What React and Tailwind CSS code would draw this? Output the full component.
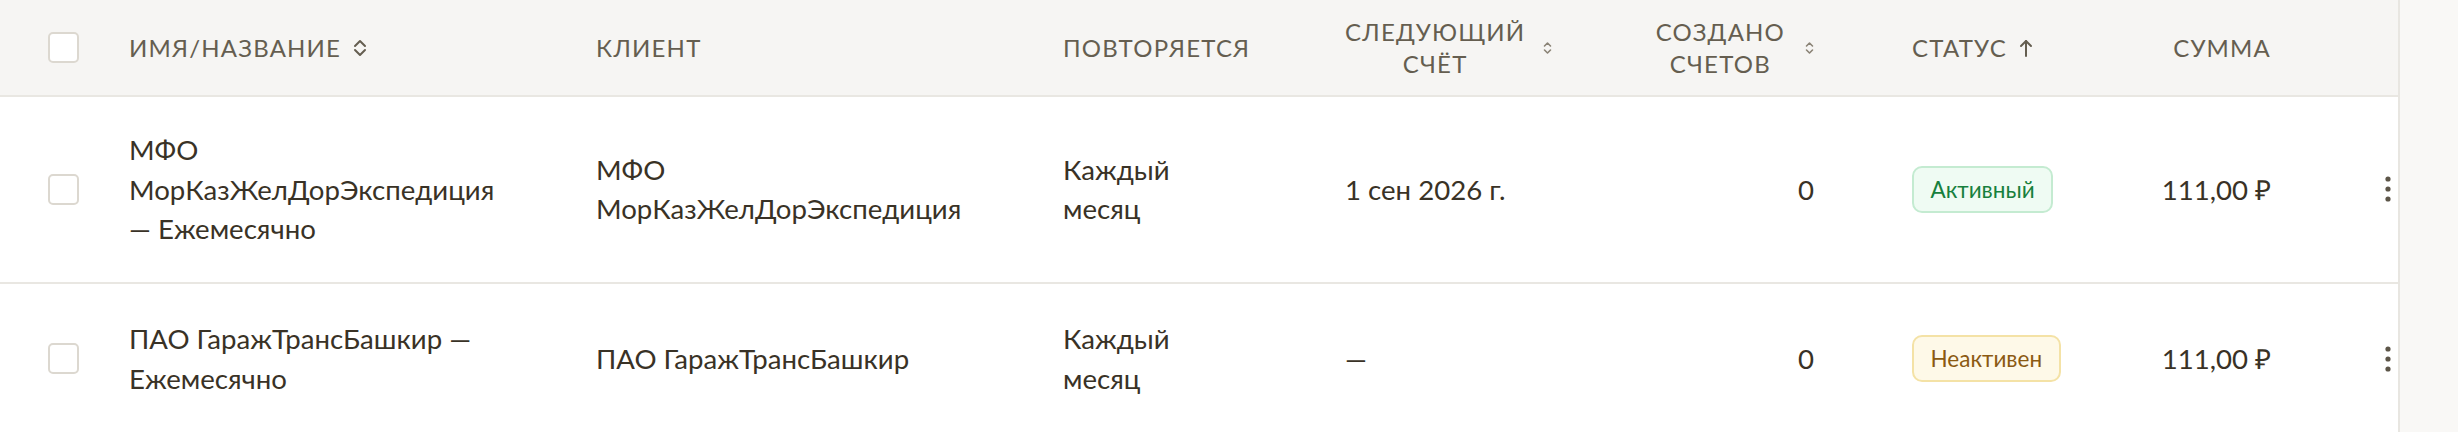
const rows = [
  {
    name: 'МФО МорКазЖелДорЭкспедиция — Ежемесячно',
    client: 'МФО МорКазЖелДорЭкспедиция',
    repeat: 'Каждый месяц',
    next: '1 сен 2026 г.',
    created: 0,
    status: 'active',
    sum: '111,00 ₽',
  },
  {
    name: 'ПАО ГаражТрансБашкир — Ежемесячно',
    client: 'ПАО ГаражТрансБашкир',
    repeat: 'Каждый месяц',
    next: '—',
    created: 0,
    status: 'inactive',
    sum: '111,00 ₽',
  },
]

const cols =
  'grid grid-cols-[129px_467px_467px_282px_255px_312px_238px_121px_127px]'

function Checkbox() {
  return <div className="w-[31px] h-[31px] rounded-[5px] border-2 border-[#dcd8d0] bg-white" />
}

function SortIcon({ big }) {
  if (big) {
    return (
      <svg width="14" height="18" viewBox="0 0 14 18" fill="none" stroke="#655e50" strokeWidth="2" strokeLinecap="round" strokeLinejoin="round">
        <path d="M2 7 7 2l5 5" />
        <path d="M2 11l5 5 5-5" />
      </svg>
    )
  }
  return (
    <svg width="9" height="14" viewBox="0 0 9 14" fill="none" stroke="#8a8376" strokeWidth="1.6" strokeLinecap="round" strokeLinejoin="round">
      <path d="M1.5 5 4.5 2l3 3" />
      <path d="M1.5 9l3 3 3-3" />
    </svg>
  )
}

function ArrowUp() {
  return (
    <svg width="14" height="18" viewBox="0 0 14 18" fill="none" stroke="#655e50" strokeWidth="2" strokeLinecap="round" strokeLinejoin="round">
      <path d="M7 17V2" />
      <path d="M2 7l5-5 5 5" />
    </svg>
  )
}

function Kebab() {
  return (
    <svg width="6" height="26" viewBox="0 0 6 26" fill="#5c5548">
      <circle cx="3" cy="3" r="2.6" />
      <circle cx="3" cy="13" r="2.6" />
      <circle cx="3" cy="23" r="2.6" />
    </svg>
  )
}

function StatusBadge({ status }) {
  if (status === 'active') {
    return (
      <span className="inline-flex items-center h-[47px] px-[16.5px] rounded-[10px] border-2 border-[#c4ebd1] bg-[#effbf3] text-[#17803d] text-[22.5px]">
        Активный
      </span>
    )
  }
  return (
    <span className="inline-flex items-center h-[47px] px-[16.5px] rounded-[10px] border-2 border-[#f4e2a6] bg-[#fef9e8] text-[#8b5a12] text-[22.5px]">
      Неактивен
    </span>
  )
}

function Row({ row }) {
  return (
    <div className={`${cols} items-center min-h-[152px] py-[33px] border-b-2 border-[#e9e7e2] bg-white`}>
      <div className="pl-[48px] flex">
        <Checkbox />
      </div>
      <div className="pr-[85px]">{row.name}</div>
      <div className="pr-[51px]">{row.client}</div>
      <div className="max-w-[160px]">{row.repeat}</div>
      <div>{row.next}</div>
      <div className="text-right pr-[98px]">{row.created}</div>
      <div>
        <StatusBadge status={row.status} />
      </div>
      <div className="text-right">{row.sum}</div>
      <div className="flex justify-end pr-[7px]">
        <Kebab />
      </div>
    </div>
  )
}

export default function App() {
  return (
    <div className="flex w-[2458px] h-[432px] overflow-hidden bg-[#f9f8f6] font-['Lato',sans-serif]">
      <div className="w-[2398px] shrink-0 bg-white text-[27.6px] leading-[39.5px] text-[#393226]">
        {/* Header */}
        <div className={`${cols} items-center h-[97px] border-b-2 border-[#e9e7e2] bg-[#f6f5f3] text-[#655e50] text-[24px] leading-[32px] uppercase tracking-[0.05em]`}>
          <div className="pl-[48px] flex">
            <Checkbox />
          </div>
          <div className="flex items-center gap-[12px]">
            <span>Имя/название</span>
            <SortIcon big />
          </div>
          <div>Клиент</div>
          <div>Повторяется</div>
          <div className="flex items-center gap-[18px]">
            <span className="text-center">
              Следующий
              <br />
              счёт
            </span>
            <SortIcon />
          </div>
          <div className="flex items-center justify-end gap-[20px] pr-[98px]">
            <span className="text-center">
              Создано
              <br />
              счетов
            </span>
            <SortIcon />
          </div>
          <div className="flex items-center gap-[12px]">
            <span>Статус</span>
            <ArrowUp />
          </div>
          <div className="text-right">Сумма</div>
          <div />
        </div>

        {rows.map((row, i) => (
          <Row key={i} row={row} />
        ))}
      </div>
      <div className="flex-1 border-l-2 border-[#e8e6e1] bg-[#f9f8f6]" />
    </div>
  )
}
